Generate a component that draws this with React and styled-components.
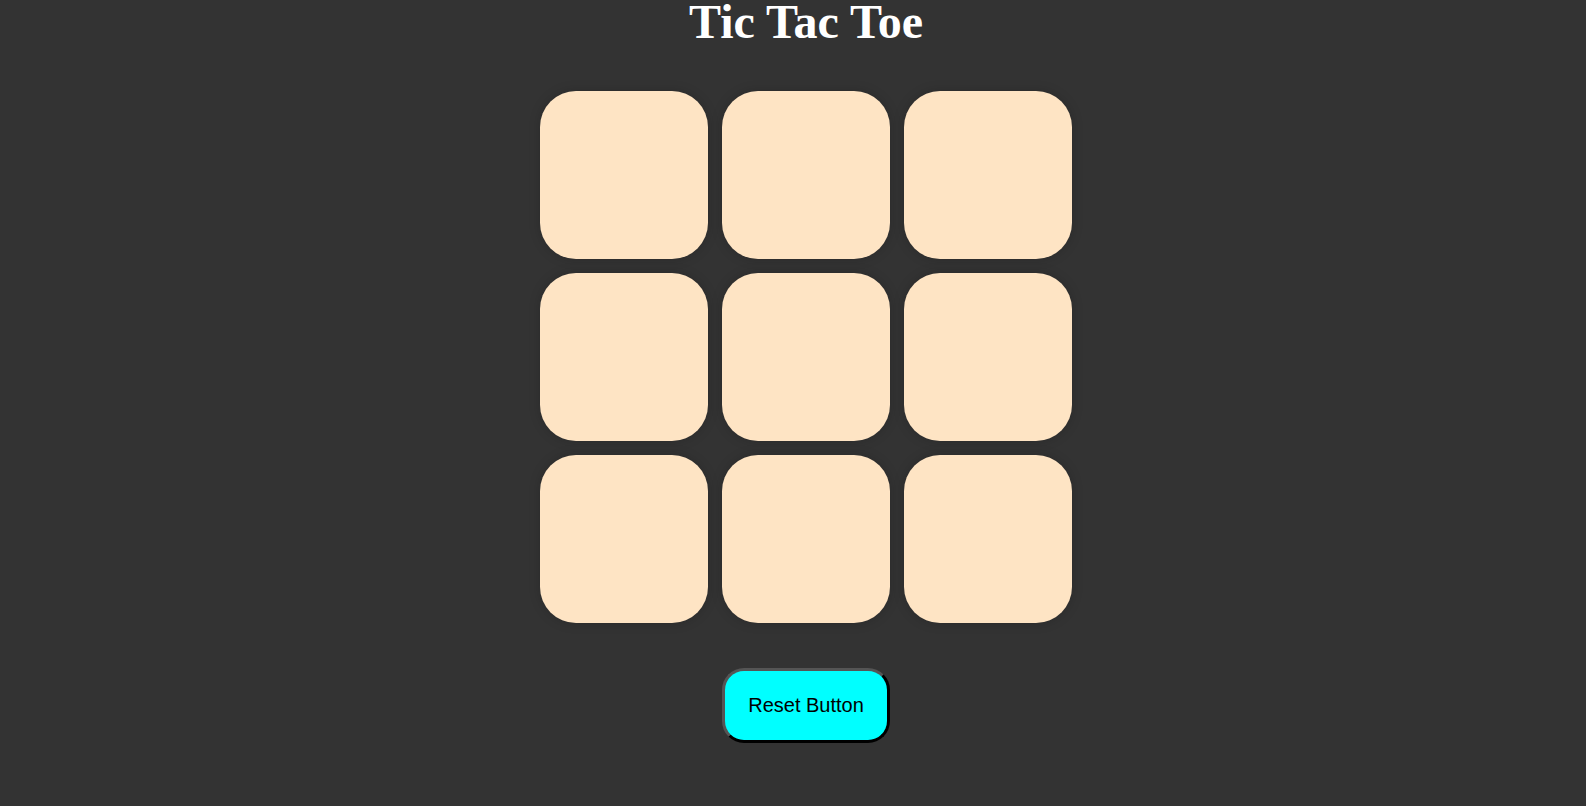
import React, { useState } from 'react';
import styled, { createGlobalStyle } from 'styled-components';

const GlobalStyle = createGlobalStyle`
	html, body {
		margin: 0;
		padding: 0;
		background-color: #333333;
	}
	body {
		min-height: 100vh;
	}
`;

const Page = styled.div`
	display: flex;
	flex-direction: column;
	align-items: center;
	padding-left: 26px;
	min-height: 100vh;
	box-sizing: border-box;
`;

const Title = styled.h1`
	margin: 0;
	font-family: 'Liberation Serif', 'Times New Roman', serif;
	font-size: 48px;
	line-height: 43px;
	font-weight: bold;
	color: #ffffff;
`;

const Board = styled.div`
	display: grid;
	grid-template-columns: repeat(3, 168px);
	grid-auto-rows: 168px;
	gap: 14px;
	margin-top: 48px;
`;

const Cell = styled.div`
	background-color: #fee4c4;
	border-radius: 36px;
	box-shadow: 0 0 12px rgba(0, 0, 0, 0.18);
	display: flex;
	align-items: center;
	justify-content: center;
	font-family: 'Liberation Sans', Arial, sans-serif;
	font-size: 96px;
	font-weight: bold;
	color: #333333;
	cursor: pointer;
`;

const ResetButton = styled.button`
	margin-top: 45px;
	width: 168px;
	height: 75px;
	box-sizing: border-box;
	background-color: #00ffff;
	border: 3px solid;
	border-color: #555555 #000000 #000000 #555555;
	border-radius: 22px;
	font-family: 'Liberation Sans', Arial, sans-serif;
	font-size: 20px;
	color: #000000;
	cursor: pointer;
`;

export default function App() {
	const [cells, setCells] = useState(Array(9).fill(''));
	const [turn, setTurn] = useState('X');

	const play = (i) => {
		if (cells[i]) return;
		const next = [...cells];
		next[i] = turn;
		setCells(next);
		setTurn(turn === 'X' ? 'O' : 'X');
	};

	const reset = () => {
		setCells(Array(9).fill(''));
		setTurn('X');
	};

	return (
		<>
			<GlobalStyle />
			<Page>
				<Title>Tic Tac Toe</Title>
				<Board>
					{cells.map((value, i) => (
						<Cell key={i} onClick={() => play(i)}>
							{value}
						</Cell>
					))}
				</Board>
				<ResetButton onClick={reset}>Reset Button</ResetButton>
			</Page>
		</>
	);
}
